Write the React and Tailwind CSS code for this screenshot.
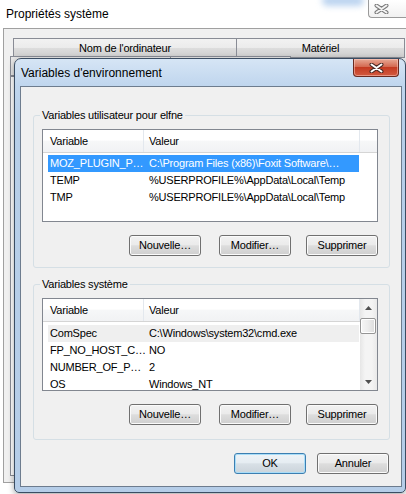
import React from "react";

function Btn({ children, def }) {
  return (
    <div
      className={
        def
          ? "flex h-[21px] w-[72px] shrink-0 items-center justify-center rounded-[3px] border border-[#3c7fb1] bg-[linear-gradient(#eef3f7,#e6edf2_45%,#d8e0e6_52%,#cbd4db)] text-[11px] text-black shadow-[inset_0_0_0_1px_#a9ddf8]"
          : "flex h-[21px] w-[72px] shrink-0 items-center justify-center rounded-[3px] border border-[#707070] bg-[linear-gradient(#f2f2f2,#ebebeb_45%,#dddddd_52%,#cfcfcf)] text-[11px] text-black shadow-[inset_0_0_0_1px_#fbfbfb]"
      }
    >
      {children}
    </div>
  );
}

function Header({ filler }) {
  return (
    <div className="flex h-[23px] shrink-0 border-b border-[#d5d5d5] bg-[linear-gradient(#ffffff,#ffffff_45%,#f6f7f8_52%,#f1f2f4)] text-[11px] text-black">
      <div className="flex w-[101px] items-center border-r border-[#e3e8ee] pl-[7px] pt-[1px]">Variable</div>
      <div className="flex w-[216px] items-center border-r border-[#e3e8ee] pl-[5px] pt-[1px]">Valeur</div>
      {filler ? <div className="flex-1" /> : null}
    </div>
  );
}

function Row({ a, b, sel, hot }) {
  return (
    <div
      className={
        sel
          ? "ml-[5px] flex h-[17px] w-[311px] shrink-0 items-center bg-[#3399ff] text-[11px] text-white"
          : hot
          ? "ml-[5px] flex h-[17px] w-[311px] shrink-0 items-center bg-[#efefef] text-[11px] text-black"
          : "ml-[5px] flex h-[17px] w-[311px] shrink-0 items-center text-[11px] text-black"
      }
    >
      <span className="w-[101px] shrink-0 whitespace-nowrap pl-[2px]">{a}</span>
      <span className="whitespace-nowrap">{b}</span>
    </div>
  );
}

function CloseX({ white }) {
  return (
    <svg width="15" height="10" viewBox="0 0 15 10">
      <path d="M2.5 1.5 L12.5 8.5 M12.5 1.5 L2.5 8.5" stroke={white ? "#4a2a24" : "#7b7b7b"} strokeWidth="4" strokeLinecap="round" fill="none" />
      <path d="M2.5 1.5 L12.5 8.5 M12.5 1.5 L2.5 8.5" stroke={white ? "#ffffff" : "#f4f4f4"} strokeWidth="2" strokeLinecap="round" fill="none" />
    </svg>
  );
}

function GroupBox({ label, children, pb }) {
  return (
    <fieldset
      className={
        pb
          ? "ml-[12px] mr-[11px] rounded-[3px] border border-[#d5dfe5] pb-[14px]"
          : "ml-[12px] mr-[11px] rounded-[3px] border border-[#d5dfe5] pb-[11px]"
      }
    >
      <legend className="ml-[6px] px-[2px] text-[11px] leading-[14px] text-black">{label}</legend>
      {children}
    </fieldset>
  );
}

function Buttons() {
  return (
    <div className="mt-[13px] flex justify-end pr-[11px]">
      <Btn>Nouvelle…</Btn>
      <div className="w-[18px]" />
      <Btn>Modifier…</Btn>
      <div className="w-[15px]" />
      <Btn>Supprimer</Btn>
    </div>
  );
}

export default function App() {
  return (
    <div className="relative h-[494px] w-[406px] overflow-hidden bg-white font-['Liberation_Sans',Arial,sans-serif] tracking-[-0.2px] text-black">
      {/* background window */}
      <div className="flex h-[28px] items-start justify-between">
        <div className="pl-[6px] pt-[6px] text-[12px] leading-[16px] tracking-normal">Propriétés système</div>
        <div className="flex h-[18px] w-[38px] items-center justify-start rounded-bl-[4px] border-b border-l border-[#9a9a9a] bg-[linear-gradient(#ffffff,#f1f1f1)] pl-[5px]">
          <CloseX />
        </div>
      </div>
      <div className="pointer-events-none absolute left-[322px] top-[-5px] h-[11px] w-[42px] rounded-full bg-[#bcd4f0] blur-[3px]" />
      <div className="ml-[3px] flex h-[455px] flex-col border-b border-l border-t border-[#a0a0a0] bg-[#f0f0f0]">
        <div className="ml-[9px] mt-[9px] flex">
          <div className="flex h-[20px] w-[224px] items-center justify-center border border-[#898c95] bg-[linear-gradient(#f2f2f2,#ebebeb_50%,#dddddd_50%,#cfcfcf)] text-[11px]">
            Nom de l'ordinateur
          </div>
          <div className="flex h-[20px] w-[168px] items-center justify-center border border-l-0 border-[#898c95] bg-[linear-gradient(#f2f2f2,#ebebeb_50%,#dddddd_50%,#cfcfcf)] text-[11px]">
            Matériel
          </div>
        </div>
        <div className="ml-[6px] mt-[-2px] flex">
          <div className="h-[20px] w-[161px] border border-[#898c95] bg-[#e8e8e8]" />
          <div className="h-[20px] w-[120px] border border-l-0 border-[#898c95] bg-[#e8e8e8]" />
        </div>
        <div className="mb-[6px] ml-[6px] flex-1 border border-[#898c95] bg-white" />
      </div>

      {/* dialog */}
      <div className="absolute left-[14px] top-[58px] flex h-[435px] w-[392px] flex-col rounded-b-[5px] rounded-t-[7px] border border-[#3a4d63] bg-[linear-gradient(180deg,#d6e5f5,#c0d6ee_26px,#b7cfe9_60px,#b5cde8)] shadow-[0_2px_6px_rgba(0,0,0,0.35)]">
        <div className="flex h-[27px] shrink-0 items-start justify-between">
          <div className="pl-[6px] pt-[6px] text-[12px] leading-[16px] tracking-normal text-black">Variables d'environnement</div>
          <div className="mr-[6px] flex h-[18px] w-[46px] items-center justify-center rounded-b-[4px] border border-t-0 border-[#6a2a20] bg-[linear-gradient(#e7a995,#d46a52_45%,#c43b22_50%,#d25a40)] shadow-[inset_0_0_0_1px_rgba(255,210,200,0.5)]">
            <CloseX white />
          </div>
        </div>
        <div className="ml-[5px] mr-[3px] flex h-[401px] shrink-0 flex-col border border-[#6d7c8e] bg-[#f0f0f0] pt-[21px]">
          <GroupBox label="Variables utilisateur pour elfne">
            <div className="ml-[8px] mt-[7px] flex h-[93px] w-[336px] flex-col overflow-hidden border border-[#828790] bg-white">
              <Header filler />
              <div className="mt-[2px] flex flex-col">
                <Row sel a="MOZ_PLUGIN_P…" b="C:\Program Files (x86)\Foxit Software\…" />
                <Row a="TEMP" b="%USERPROFILE%\AppData\Local\Temp" />
                <Row a="TMP" b="%USERPROFILE%\AppData\Local\Temp" />
              </div>
            </div>
            <Buttons />
          </GroupBox>
          <div className="h-[9px] shrink-0" />
          <GroupBox label="Variables système" pb>
            <div className="ml-[8px] mt-[7px] flex h-[93px] w-[336px] overflow-hidden border border-[#828790] bg-white">
              <div className="flex w-[317px] flex-col">
                <Header />
                <div className="mt-[3px] flex flex-col">
                  <Row hot a="ComSpec" b="C:\Windows\system32\cmd.exe" />
                  <Row a="FP_NO_HOST_C…" b="NO" />
                  <Row a="NUMBER_OF_P…" b="2" />
                  <Row a="OS" b="Windows_NT" />
                </div>
              </div>
              <div className="flex w-[17px] flex-col bg-[linear-gradient(90deg,#e6e6e6,#f4f4f4_30%,#f4f4f4_70%,#e9e9e9)]">
                <div className="flex h-[18px] shrink-0 items-center justify-center">
                  <svg width="7" height="4" viewBox="0 0 7 4"><polygon points="3.5,0 7,4 0,4" fill="#505050" /></svg>
                </div>
                <div className="mt-[1px] h-[16px] w-[16px] shrink-0 rounded-[2px] border border-[#959595] bg-[linear-gradient(90deg,#f6f6f6,#ececec_50%,#dcdcdc)] shadow-[inset_0_0_0_1px_#ffffff]" />
                <div className="flex-1" />
                <div className="flex h-[17px] shrink-0 items-center justify-center">
                  <svg width="7" height="4" viewBox="0 0 7 4"><polygon points="0,0 7,0 3.5,4" fill="#505050" /></svg>
                </div>
              </div>
            </div>
            <Buttons />
          </GroupBox>
          <div className="mt-[13px] flex justify-end gap-[11px] pr-[12px]">
            <Btn def>OK</Btn>
            <Btn>Annuler</Btn>
          </div>
        </div>
      </div>
    </div>
  );
}
